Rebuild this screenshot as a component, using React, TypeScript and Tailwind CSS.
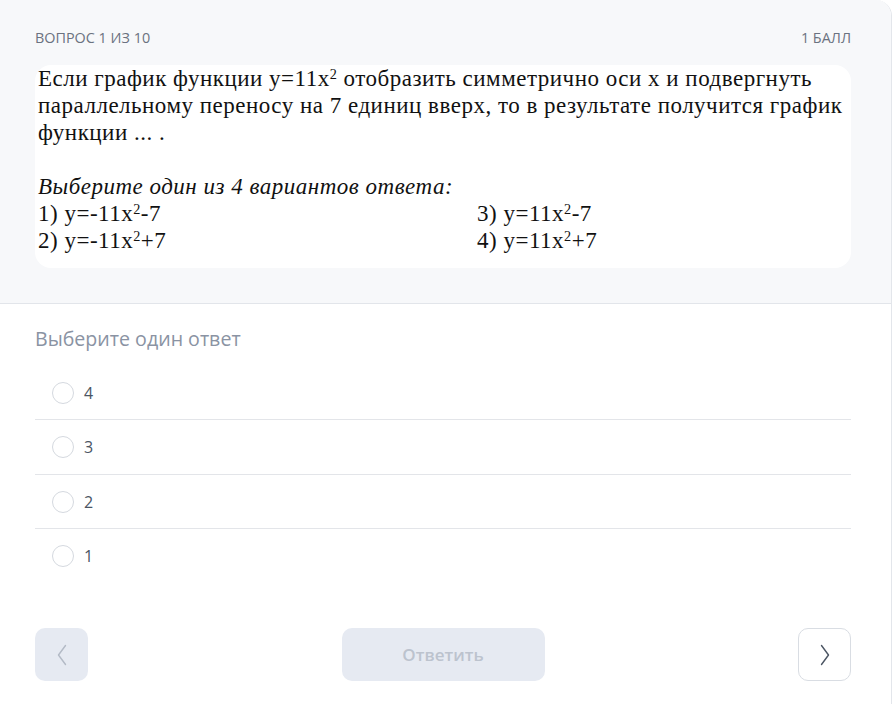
import React, { useState } from 'react';

const options = ['4', '3', '2', '1'];
const rowHeights = ['h-[54px]', 'h-[55px]', 'h-[54px]', 'h-[54px]'];

const Chevron = ({ dir, color }: { dir: 'left' | 'right'; color: string }) => (
  <svg width="10" height="22" viewBox="0 0 10 22" fill="none">
    <path
      d={dir === 'left' ? 'M8.5 1.5 L1.5 11 L8.5 20.5' : 'M1.5 1.5 L8.5 11 L1.5 20.5'}
      stroke={color}
      strokeWidth="1.4"
      strokeLinecap="round"
      strokeLinejoin="round"
    />
  </svg>
);

const App = () => {
  const [selected, setSelected] = useState(-1);

  return (
    <div className="w-[895px] h-[704px] bg-white overflow-hidden font-['Open_Sans',sans-serif]">
      <div className="w-[892px] min-h-[720px] border-r border-[#e3e6eb] rounded-tr-2xl overflow-hidden">
        {/* question header */}
        <div className="bg-[#f7f8fa] border-b border-[#e2e5ea] pl-[35px] pr-[40px] pt-[28px] pb-[35px]">
          <div className="flex justify-between text-[14.4px] leading-[20px] text-[#6b7280] uppercase">
            <span>Вопрос 1 из 10</span>
            <span>1 балл</span>
          </div>
          <div className="mt-[17px] bg-white rounded-2xl pl-[3px] pb-[14px] font-['Liberation_Serif',serif] text-[23px] tracking-[0.5px] leading-[27px] text-[#111]">
            <p className="whitespace-nowrap">
              Если график функции y=11x<sup className="text-[0.62em]">2</sup> отобразить симметрично оси x и подвергнуть
              <br />
              параллельному переносу на 7 единиц вверх, то в результате получится график
              <br />
              функции ... .
            </p>
            <p className="h-[27px]" />
            <p className="italic">Выберите один из 4 вариантов ответа:</p>
            <div className="grid grid-cols-[439px_1fr]">
              <div>1) y=-11x<sup className="text-[0.62em]">2</sup>-7</div>
              <div>3) y=11x<sup className="text-[0.62em]">2</sup>-7</div>
              <div>2) y=-11x<sup className="text-[0.62em]">2</sup>+7</div>
              <div>4) y=11x<sup className="text-[0.62em]">2</sup>+7</div>
            </div>
          </div>
        </div>

        {/* answers */}
        <div className="pl-[35px] pr-[40px] pt-[22px]">
          <div className="text-[19.6px] leading-[26px] text-[#8a93a3]">Выберите один ответ</div>
          <div className="mt-[14px]">
            {options.map((o, i) => (
              <label
                key={o}
                className={`flex items-center cursor-pointer ${rowHeights[i]} ${i < options.length - 1 ? 'border-b border-[#e3e5e9]' : ''}`}
                onClick={() => setSelected(i)}
              >
                <span className="ml-[17px] w-[22px] h-[22px] rounded-full border-[1.5px] border-[#d5d9df] bg-white flex items-center justify-center">
                  {selected === i && <span className="w-[10px] h-[10px] rounded-full bg-[#3b82f6]" />}
                </span>
                <span className="ml-[10px] text-[16px] text-[#4b5563]">{o}</span>
              </label>
            ))}
          </div>

          <div className="mt-[45px] flex items-center justify-between">
            <button className="w-[53px] h-[53px] rounded-[10px] bg-[#e6eaf2] flex items-center justify-center">
              <Chevron dir="left" color="#b3bac6" />
            </button>
            <button className="w-[203px] h-[53px] rounded-[10px] bg-[#e6eaf2] text-[17px] font-semibold text-[#bcc3ce]">
              Ответить
            </button>
            <button className="w-[53px] h-[53px] rounded-[10px] bg-white border border-[#d9dde3] flex items-center justify-center">
              <Chevron dir="right" color="#4b5563" />
            </button>
          </div>
        </div>
      </div>
    </div>
  );
};

export default App;
